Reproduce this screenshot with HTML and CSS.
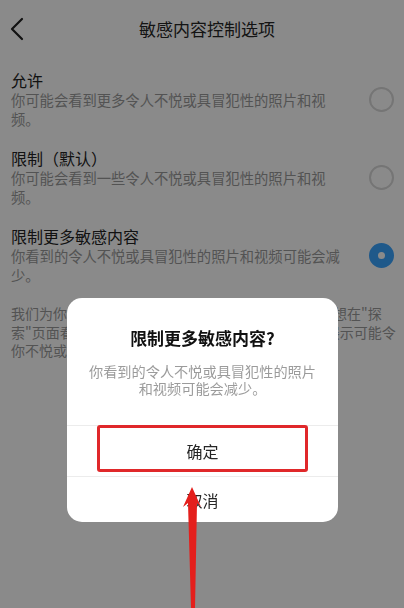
FILE: index.html
```html
<!DOCTYPE html>
<html lang="zh-CN">
<head>
<meta charset="utf-8">
<title>敏感内容控制选项</title>
<link rel="stylesheet" href="styles.css">
</head>
<body>
<div class="screen">
  <header class="topbar">
    <svg class="back" width="14" height="24" viewBox="0 0 14 24" aria-hidden="true"><polyline points="12,2 2,12 12,22" fill="none" stroke="#222" stroke-width="2.2" stroke-linecap="round" stroke-linejoin="round"/></svg>
    <h1 class="title">敏感内容控制选项</h1>
    <span></span>
  </header>
  <main class="options">
    <div class="option">
      <div class="opt-text">
        <div class="opt-title">允许</div>
        <div class="opt-desc">你可能会看到更多令人不悦或具冒犯性的照片和视频。</div>
      </div>
      <span class="radio"></span>
    </div>
    <div class="option">
      <div class="opt-text">
        <div class="opt-title">限制（默认）</div>
        <div class="opt-desc">你可能会看到一些令人不悦或具冒犯性的照片和视频。</div>
      </div>
      <span class="radio"></span>
    </div>
    <div class="option">
      <div class="opt-text">
        <div class="opt-title">限制更多敏感内容</div>
        <div class="opt-desc">你看到的令人不悦或具冒犯性的照片和视频可能会减少。</div>
      </div>
      <span class="radio selected"></span>
    </div>
    <p class="note">我们为你提供了这些控制选项，方便你决定自己是否想在"探<br>索"页面看到的敏感内容。我们认为其中某些内容的展示可能令<br>你不悦或感到被冒犯。</p>
  </main>
</div>

<div class="overlay"></div>

<div class="dialog">
  <div class="dialog-body">
    <div class="dialog-title">限制更多敏感内容?</div>
    <div class="dialog-msg">你看到的令人不悦或具冒犯性的照片和视频可能会减少。</div>
  </div>
  <div class="dialog-btn confirm">确定</div>
  <div class="dialog-btn cancel">取消</div>
  <div class="highlight"></div>
</div>

<svg class="arrow" width="28" height="124" viewBox="178 484 28 124" aria-hidden="true">
  <polygon points="192,487 201,507 197,503 195,608 191,608 188,503 183,507" fill="#e41f1c"/>
</svg>
</body>
</html>
```

FILE: styles.css
```css
* { box-sizing: border-box; }

html, body {
  margin: 0;
  padding: 0;
  width: 404px;
  height: 608px;
  overflow: hidden;
  background: #fff;
  font-family: "Noto Sans CJK SC", "Noto Sans", sans-serif;
}

.screen {
  width: 404px;
  height: 608px;
  background: #fff;
}

.topbar {
  height: 52px;
  display: grid;
  grid-template-columns: 1fr auto 1fr;
  align-items: center;
  padding-left: 10px;
}

.back { display: block; margin-top: 6px; }

.title {
  margin: 0;
  font-size: 17px;
  font-weight: 400;
  line-height: 24px;
  color: #262626;
  margin-top: 6px;
}

.options {
  padding: 18px 10px 0 11px;
}

.option {
  display: flex;
  align-items: center;
  gap: 20px;
  margin-bottom: 20px;
}

.opt-text { flex: 1; min-width: 0; }

.opt-title {
  font-size: 16px;
  line-height: 20px;
  color: #222;
}

.opt-desc {
  font-size: 14.3px;
  line-height: 19px;
  color: #9a9a9a;
}

.radio {
  flex: 0 0 25px;
  width: 25px;
  height: 25px;
  border: 2px solid #d8d8d8;
  border-radius: 50%;
  background: #fff;
}

.radio.selected {
  border: 9px solid #3aa4ff;
}

.note {
  margin: 0;
  font-size: 14px;
  line-height: 18.5px;
  color: #9a9a9a;
  white-space: nowrap;
}

.overlay {
  position: fixed;
  inset: 0;
  background: rgba(0, 0, 0, 0.46);
}

.dialog {
  position: absolute;
  left: 67px;
  top: 298px;
  width: 271px;
  background: #fff;
  border-radius: 15px;
  overflow: hidden;
}

.dialog-body {
  padding: 29px 20px 28px;
  text-align: center;
}

.dialog-title {
  font-size: 17px;
  font-weight: 600;
  line-height: 22px;
  color: #111;
}

.dialog-msg {
  margin-top: 14px;
  font-size: 14.2px;
  line-height: 17px;
  color: #9b9b9b;
}

.dialog-btn {
  display: flex;
  align-items: center;
  justify-content: center;
  border-top: 1px solid #ececec;
  font-size: 16px;
  color: #262626;
}

.dialog-btn.confirm { height: 51px; }
.dialog-btn.cancel { height: 46px; }

.highlight {
  position: absolute;
  left: 30px;
  top: 127px;
  width: 211px;
  height: 47px;
  border: 3px solid #e0282a;
  border-radius: 3px;
}

.arrow {
  position: absolute;
  left: 178px;
  top: 484px;
}
```
